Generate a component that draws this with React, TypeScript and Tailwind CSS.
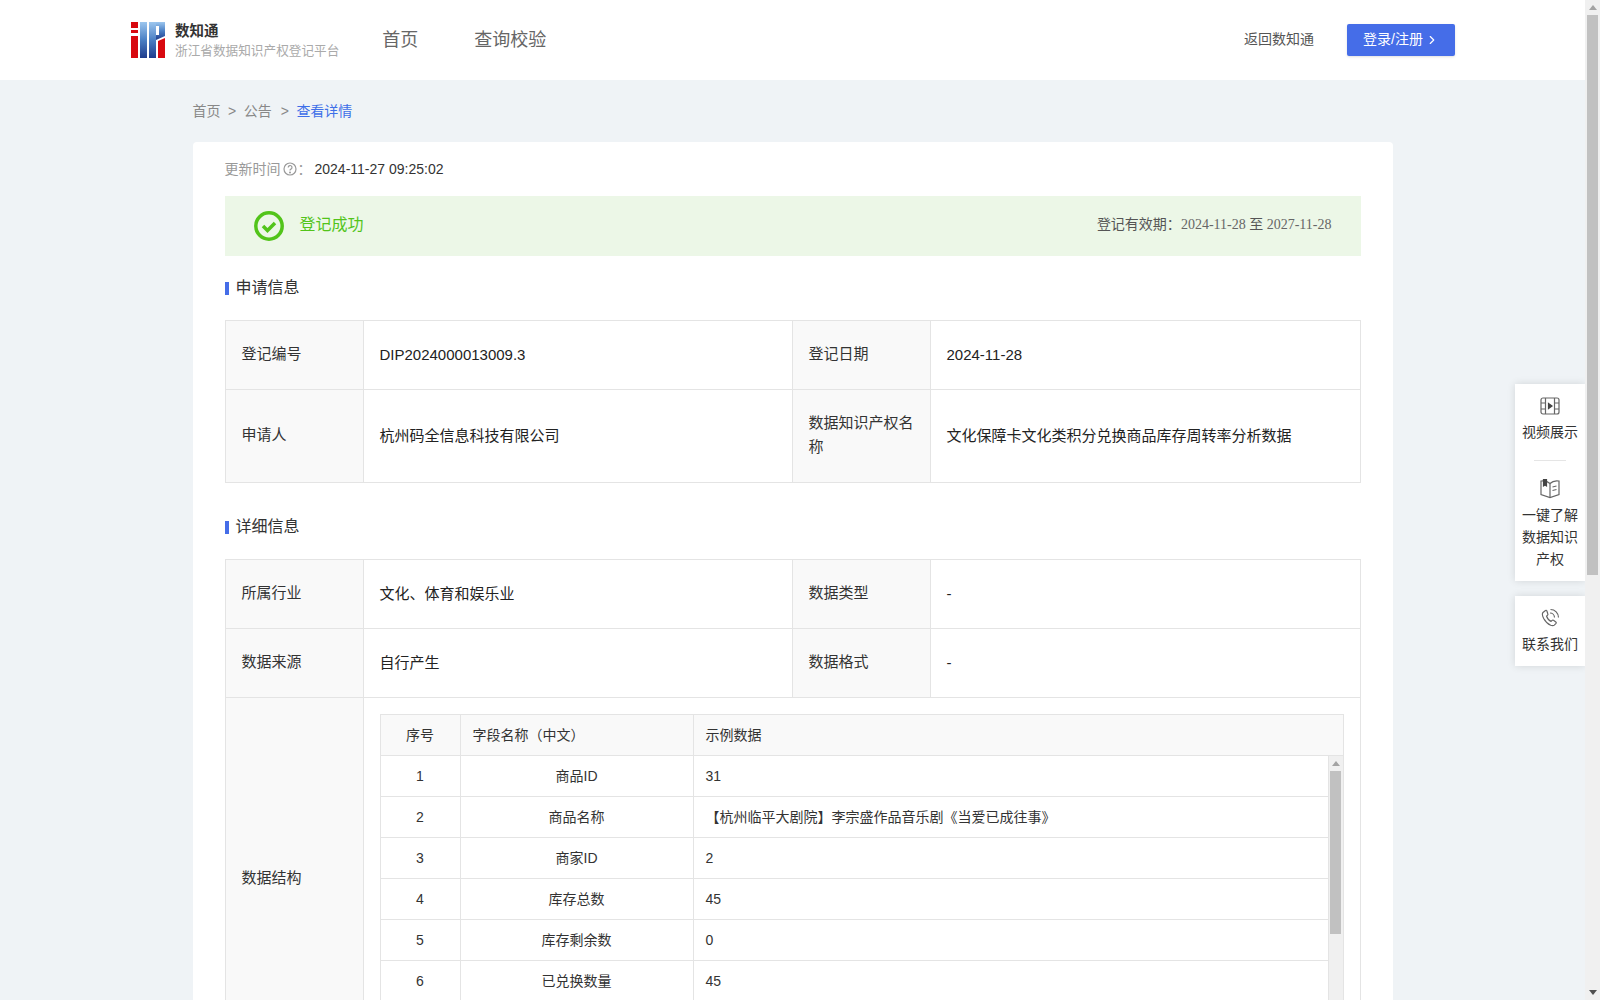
import { ChevronRight } from 'lucide-react'

const font = { fontFamily: '"Liberation Sans", "Noto Sans CJK SC", sans-serif' }

const fieldRows = [
  ['1', '商品ID', '31'],
  ['2', '商品名称', '【杭州临平大剧院】李宗盛作品音乐剧《当爱已成往事》'],
  ['3', '商家ID', '2'],
  ['4', '库存总数', '45'],
  ['5', '库存剩余数', '0'],
  ['6', '已兑换数量', '45'],
]

function Logo() {
  return (
    <svg width="36" height="38" viewBox="0 0 36 38" className="shrink-0">
      <defs>
        <linearGradient id="ipBlue" x1="0" y1="0" x2="0" y2="1">
          <stop offset="0" stopColor="#9cc6ee" />
          <stop offset="0.5" stopColor="#4a7fc4" />
          <stop offset="1" stopColor="#1f3c8c" />
        </linearGradient>
      </defs>
      <rect x="1" y="1" width="7" height="36" fill="#d8090f" />
      <rect x="1" y="7" width="7" height="2" fill="#fff" />
      <rect x="1" y="12" width="7" height="3" fill="#fff" />
      <rect x="10" y="1" width="7" height="36" fill="url(#ipBlue)" />
      <rect x="19" y="1" width="7" height="36" fill="url(#ipBlue)" />
      <path d="M26 1h9v14l-9 4v-5h3V5h-3z" fill="url(#ipBlue)" />
      <path d="M35 17v20h-7V20z" fill="#d8090f" />
    </svg>
  )
}

function SectionTitle({ children }: { children: string }) {
  return (
    <div className="flex items-center h-[22px]">
      <span className="w-1 h-[13px] bg-[#456de8] mr-[7px] mt-px" />
      <span className="text-base text-[#333]">{children}</span>
    </div>
  )
}

function Label({ children }: { children: string }) {
  return (
    <td className="border border-[#e4e4e4] bg-[#f9f9f9] px-4 pt-[21px] pb-[23px] text-[15px] leading-6 text-[#333]">
      {children}
    </td>
  )
}

function Value({ children }: { children: string }) {
  return (
    <td className="border border-[#e4e4e4] px-4 py-[22px] text-[15px] leading-6 text-[#222]">
      {children}
    </td>
  )
}

function Cols() {
  return (
    <colgroup>
      <col className="w-[138px]" />
      <col className="w-[429px]" />
      <col className="w-[138px]" />
      <col />
    </colgroup>
  )
}

export default function App() {
  return (
    <div className="h-screen overflow-hidden flex bg-[#eff3f6]" style={font}>
      <div className="relative flex-1 min-w-0 h-full overflow-hidden">
        {/* 헤더 */}
        <header className="h-20 bg-white flex items-center pl-[130px] pr-[130px]">
          <Logo />
          <div className="ml-[9px] mt-px">
            <div className="text-[14.5px] font-bold leading-5 text-[#333]">数知通</div>
            <div className="text-[12.65px] leading-5 text-[#aaa]">浙江省数据知识产权登记平台</div>
          </div>
          <nav className="flex items-center gap-[56px] ml-[43px] text-[18px] text-[#666]">
            <span>首页</span>
            <span>查询校验</span>
          </nav>
          <span className="ml-auto text-sm text-[#555] -mt-[3px]">返回数知通</span>
          <button className="ml-[33px] w-[108px] h-8 rounded-[2px] bg-[#456de8] text-white text-sm flex items-center justify-center gap-0.5 shadow-sm">
            <span className="-mt-0.5">登录/注册</span>
            <ChevronRight className="w-3.5 h-3.5" />
          </button>
        </header>

        <main className="w-[1200px] mx-auto">
          {/* 경로 */}
          <div className="h-[62px] flex items-center gap-[7.5px] text-sm text-[#888]">
            <span>首页</span>
            <span>&gt;</span>
            <span>公告</span>
            <span className="ml-[1.5px]">&gt;</span>
            <span className="text-[#3e6fe8]">查看详情</span>
          </div>

          <div className="bg-white rounded-t-[4px] px-8 pt-4">
            <div className="h-[22px] flex items-center text-sm">
              <span className="text-[#999]">更新时间</span>
              <svg width="14" height="14" viewBox="0 0 14 14" fill="none" stroke="#999" strokeWidth="1.2" className="ml-[2px]">
                <circle cx="7" cy="7" r="6" />
                <path d="M5.2 5.500a1.900 1.900 0 1 1 2.800 1.600c-.7.4-1 .7-1 1.400" />
                <circle cx="7" cy="10.400" r=".4" />
              </svg>
              <span className="text-[#999] w-[18px] pl-px">：</span>
              <span className="text-[#333]">2024-11-27 09:25:02</span>
            </div>

            <div className="mt-4 h-[60px] bg-[#ecf7e7] flex items-center pl-[29px] pr-[29px]">
              <svg width="30" height="30" viewBox="0 0 30 30" fill="none" stroke="#52c41a" strokeWidth="3.5">
                <circle cx="15" cy="15" r="13.200" />
                <path d="M9 15l4.500 4.500L21 12" />
              </svg>
              <span className="ml-4 pb-[2px] text-base text-[#52c41a]">登记成功</span>
              <span className="ml-auto pb-[3px] text-sm text-[#555]">
                登记有效期：
                <span className="font-['Liberation_Serif'] text-[#666]">2024-11-28 </span>
                至
                <span className="font-['Liberation_Serif'] text-[#666]"> 2027-11-28</span>
              </span>
            </div>

            <div className="mt-[21px]">
              <SectionTitle>申请信息</SectionTitle>
            </div>
            <table className="mt-[21px] w-full table-fixed border-collapse">
              <Cols />
              <tbody>
                <tr>
                  <Label>登记编号</Label>
                  <Value>DIP2024000013009.3</Value>
                  <Label>登记日期</Label>
                  <Value>2024-11-28</Value>
                </tr>
                <tr>
                  <Label>申请人</Label>
                  <Value>杭州码全信息科技有限公司</Value>
                  <Label>数据知识产权名称</Label>
                  <Value>文化保障卡文化类积分兑换商品库存周转率分析数据</Value>
                </tr>
              </tbody>
            </table>

            <div className="mt-[33px]">
              <SectionTitle>详细信息</SectionTitle>
            </div>
            <table className="mt-[21px] w-full table-fixed border-collapse">
              <Cols />
              <tbody>
                <tr>
                  <Label>所属行业</Label>
                  <Value>文化、体育和娱乐业</Value>
                  <Label>数据类型</Label>
                  <Value>-</Value>
                </tr>
                <tr>
                  <Label>数据来源</Label>
                  <Value>自行产生</Value>
                  <Label>数据格式</Label>
                  <Value>-</Value>
                </tr>
                <tr>
                  <Label>数据结构</Label>
                  <td colSpan={3} className="border border-[#e4e4e4] p-4">
                    <div className="border border-[#e4e4e4] text-sm text-[#333]">
                      <div className="grid grid-cols-[79px_233px_1fr] h-[41px] bg-[#f9f9f9] border-b border-[#e4e4e4] items-center">
                        <div className="text-center">序号</div>
                        <div className="h-full flex items-center border-l border-[#e4e4e4] pl-3">字段名称（中文）</div>
                        <div className="h-full flex items-center border-l border-[#e4e4e4] pl-3">示例数据</div>
                      </div>
                      <div className="flex h-[287px] overflow-hidden">
                        <div className="flex-1 min-w-0 border-r border-[#e4e4e4]">
                          {fieldRows.map(([no, name, sample]) => (
                            <div key={no} className="grid grid-cols-[79px_233px_1fr] h-[41px] border-b border-[#e4e4e4] items-center">
                              <div className="text-center">{no}</div>
                              <div className="h-full flex items-center justify-center border-l border-[#e4e4e4]">{name}</div>
                              <div className="h-full flex items-center border-l border-[#e4e4e4] pl-3">{sample}</div>
                            </div>
                          ))}
                        </div>
                        <div className="w-[14px] bg-[#f0f0f0] flex flex-col items-center">
                          <div className="h-[15px] flex items-center justify-center">
                            <span className="w-0 h-0 border-x-[4px] border-x-transparent border-b-[5px] border-b-[#a3a3a3]" />
                          </div>
                          <div className="w-[11px] h-[163px] bg-[#c1c1c1]" />
                        </div>
                      </div>
                    </div>
                  </td>
                </tr>
              </tbody>
            </table>
          </div>
        </main>

        {/* 우측 플로팅 메뉴 */}
        <aside className="absolute top-[384px] right-0 w-[70px] flex flex-col gap-[15px] text-sm text-[#333]">
          <div className="bg-white shadow-[0_0_8px_rgba(0,0,0,0.12)] flex flex-col items-center pt-3 pb-[11px]">
            <svg width="20" height="20" viewBox="0 0 20 20" fill="none" stroke="#666" strokeWidth="1.200">
              <rect x="1" y="2" width="18" height="16" rx="2" />
              <path d="M5.500 2v16M14.500 2v16M1 7h4.500M1 13h4.500M14.500 7H19M14.500 13H19" />
              <path d="M8.500 7.500l3.500 2.500-3.500 2.500z" fill="#444" stroke="#444" />
            </svg>
            <div className="mt-[5px] leading-[22px]">视频展示</div>
            <div className="w-8 h-px bg-[#e5e5e5] mt-[17px] mb-4" />
            <svg width="22" height="22" viewBox="0 0 22 22" fill="none" stroke="#666" strokeWidth="1.200">
              <path d="M2 4c3-.5 6.500 0 9 2.500C13.500 4 17 3.500 20 4v13.500l-9 3-9-3z" />
              <path d="M11 6.500v14M13.500 10l4-1M13.500 13.500l4-1" />
              <path d="M4.500 2.500h3v6.500l-1.500-1-1.500 1z" fill="#444" stroke="#444" />
            </svg>
            <div className="mt-[5px] leading-[22px] text-center w-14">一键了解数据知识产权</div>
          </div>
          <div className="bg-white shadow-[0_0_8px_rgba(0,0,0,0.12)] flex flex-col items-center pt-3 pb-[11px]">
            <svg width="20" height="20" viewBox="0 0 20 20" fill="none" stroke="#666" strokeWidth="1.200">
              <path d="M5.500 2.500 3 4.500c-1 1-.8 3 .7 6 1.500 2.800 4 5.500 7 6.800 1.500.6 2.800.5 3.600-.2l1.700-1.800c.4-.5.3-1-.2-1.400l-2.300-1.600c-.5-.3-1-.3-1.400.1l-1 1c-1.500-.6-3.700-3-4.500-5.200l1-1c.4-.4.4-.9.2-1.400L6.800 2.700c-.3-.5-.9-.6-1.300-.2z" />
              <path d="M10 5c2.500 0 4.500 2 4.500 4.500M10.500 1.500c4.500 0 8 3.500 8 8" />
            </svg>
            <div className="mt-[5px] leading-[22px]">联系我们</div>
          </div>
        </aside>
      </div>

      {/* 페이지 스크롤바 */}
      <div className="w-[15px] h-full bg-[#f0f0f0] flex flex-col items-center shrink-0">
        <div className="h-[15px] flex items-center justify-center">
          <span className="w-0 h-0 border-x-[4px] border-x-transparent border-b-[5px] border-b-[#a3a3a3]" />
        </div>
        <div className="w-[11px] h-[560px] bg-[#c1c1c1]" />
        <div className="mt-auto h-[15px] flex items-center justify-center">
          <span className="w-0 h-0 border-x-[4px] border-x-transparent border-t-[5px] border-t-[#505050]" />
        </div>
      </div>
    </div>
  )
}
